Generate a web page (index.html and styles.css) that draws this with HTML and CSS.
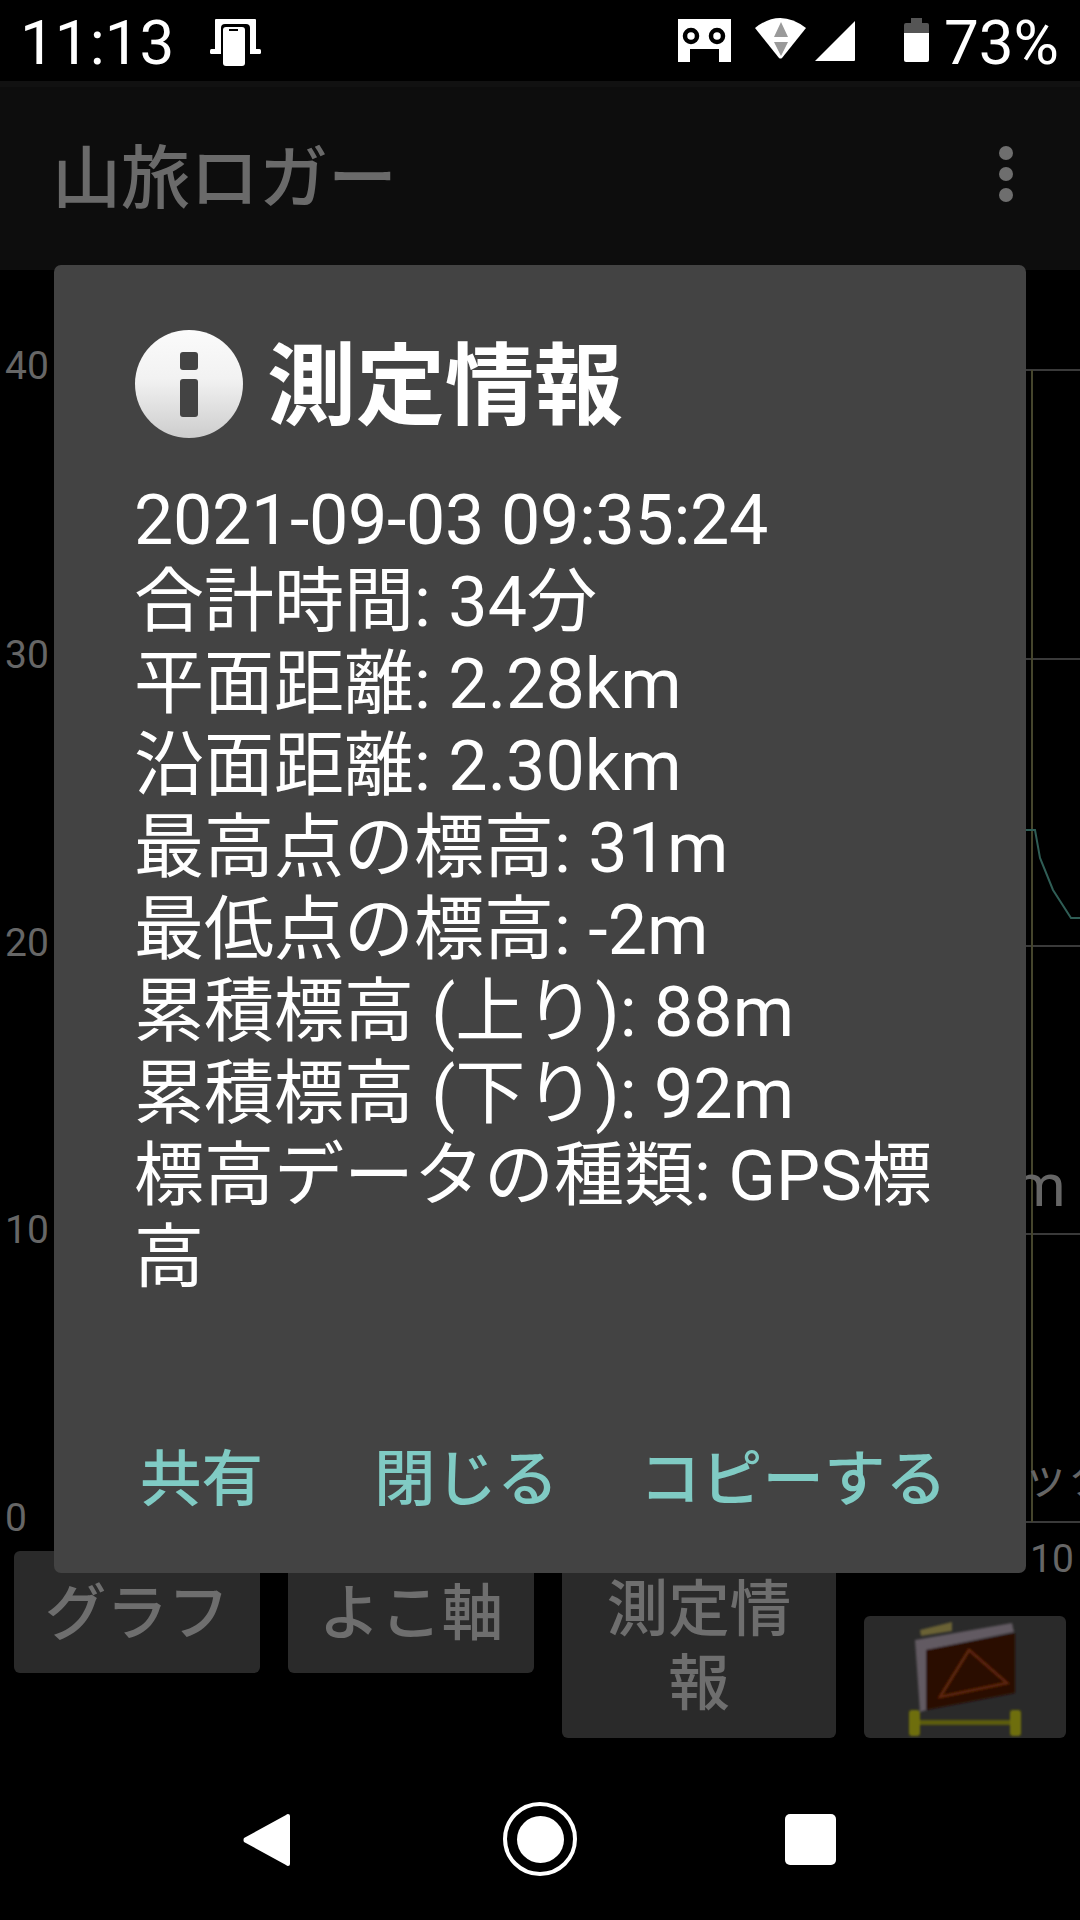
FILE: index.html
```html
<!DOCTYPE HTML>
<html lang="ja">
	<head>
		<title>山旅ロガー</title>
		<meta charset="UTF-8">
		<link rel="stylesheet" href="styles.css">
	</head>

	<body>
		<div class="screen">
			<div class="status_bar">
				<div class="status_left">
					<span class="clock">11:13</span>
					<svg class="ic_cast" width="51" height="47" viewBox="0 0 51 47">
						<path d="M5 1a1 1 0 0 1 1-1h39a1 1 0 0 1 1 1v30H5z" fill="#fff"/>
						<rect x="0" y="30" width="51" height="5" rx="1.5" fill="#fff"/>
						<rect x="11" y="5" width="29" height="42" rx="4" fill="#000"/>
						<rect x="13" y="8" width="22" height="39" rx="3" fill="#fff"/>
						<rect x="19" y="10" width="9" height="2" fill="#000"/>
					</svg>
				</div>
				<div class="status_right">
					<svg class="ic_tape" width="53" height="43" viewBox="0 0 53 43">
						<path d="M0 0h53v43H41V30H12v13H0z" fill="#fff"/>
						<circle cx="13" cy="17" r="6" fill="#fff" stroke="#000" stroke-width="4.5"/>
						<circle cx="39" cy="17" r="6" fill="#fff" stroke="#000" stroke-width="4.5"/>
					</svg>
					<svg class="ic_wifi" width="51" height="41" viewBox="0 0 51 41">
						<path d="M0 10Q25 -10 51 10L27 40q-1.500 1-3 0z" fill="#fff"/>
						<path d="M26 4l7 15H19zM19 24h14l-7 14z" fill="#9a9a9a"/>
					</svg>
					<svg class="ic_signal" width="40" height="40" viewBox="0 0 40 40">
						<path d="M40 0v39a1 1 0 0 1-1 1H0z" fill="#fff"/>
					</svg>
					<svg class="ic_battery" width="25" height="44" viewBox="0 0 25 44">
						<path d="M7 0h11v5h5a2 2 0 0 1 2 2v9H0V7a2 2 0 0 1 2-2h5z" fill="#555"/>
						<path d="M0 15h25v27a2 2 0 0 1-2 2H2a2 2 0 0 1-2-2z" fill="#fff"/>
					</svg>
					<span class="battery_text">73%</span>
				</div>
			</div>

			<div class="app_bar">
				<span class="app_title">山旅ロガー</span>
				<div class="menu_dots"><i></i><i></i><i></i></div>
			</div>

			<div class="chart">
				<svg class="chart_lines" width="1080" height="1281" viewBox="0 0 1080 1281">
					<g stroke="#3a3a3a" stroke-width="2">
						<path d="M1024 100H1080M1024 389H1080M1024 676H1080M1024 964H1080M1024 1252H1080"/>
					</g>
					<path d="M1032 100V1252" stroke="#45452c" stroke-width="2"/>
					<path d="M1024 560H1035L1040 588L1053 620L1071 648H1080" fill="none" stroke="#2f5d55" stroke-width="2"/>
				</svg>
				<span class="y_label y40">40</span>
				<span class="y_label y30">30</span>
				<span class="y_label y20">20</span>
				<span class="y_label y10">10</span>
				<span class="y_label y0">0</span>
				<span class="unit_label">m</span>
				<span class="touch_label">ック</span>
				<span class="x_label">10</span>
			</div>

			<div class="buttons">
				<div class="btn btn_graph">グラフ</div>
				<div class="btn btn_axis">よこ軸</div>
				<div class="btn btn_info">測定情報</div>
				<div class="btn btn_icon">
					<svg class="ic_sign" width="202" height="122" viewBox="0 0 202 122">
						<g filter="url(#soft)">
							<path d="M56 14L88 6V15L57 20z" fill="#6a6236"/>
							<path d="M51 24L148 7L150 16L63 34V94L56 96z" fill="#625a62"/>
							<path d="M62 34L151 17V77L62 94z" fill="#2a0b06"/>
							<path d="M105 34L143 67L76 81z" fill="none" stroke="#5e2708" stroke-width="2.500"/>
							<rect x="45" y="94" width="11" height="26" rx="3" fill="#6e6e08"/>
							<rect x="146" y="94" width="11" height="26" rx="3" fill="#6e6e08"/>
							<rect x="56" y="104" width="90" height="5" fill="#5c5c10"/>
						</g>
						<defs>
							<filter id="soft"><feGaussianBlur stdDeviation="1.2"/></filter>
						</defs>
					</svg>
				</div>
			</div>

			<div class="nav_bar">
				<svg class="nav_back" width="48" height="54" viewBox="0 0 48 54">
					<path d="M45 1a2 2 0 0 1 2 2V51a2 2 0 0 1-2 2q-1 0-2-1L1 29q-1-2 0-4L43 2q1-1 2-1z" fill="#fff"/>
				</svg>
				<div class="nav_home"><i></i></div>
				<div class="nav_square"></div>
			</div>

			<div class="dialog">
				<div class="dialog_head">
					<div class="info_icon"><i class="info_dot"></i><i class="info_stem"></i></div>
					<h2 class="dialog_title">測定情報</h2>
				</div>
				<div class="dialog_body">
					<span class="date_line">2021-09-03 09:35:24</span><br>
					合計時間: 34分<br>
					平面距離: 2.28km<br>
					沿面距離: 2.30km<br>
					最高点の標高: 31m<br>
					最低点の標高: -2m<br>
					累積標高 (上り): 88m<br>
					累積標高 (下り): 92m<br>
					標高データの種類: GPS標高
				</div>
				<div class="dialog_actions">
					<span class="action action_share">共有</span>
					<span class="action">閉じる</span>
					<span class="action">コピーする</span>
				</div>
			</div>
		</div>
	</body>
</html>
```

FILE: styles.css
```css
html, body
	{
		margin: 0;
		padding: 0;
		background: #000;
	}

.screen
	{
		position: relative;
		width: 1080px;
		height: 1920px;
		overflow: hidden;
		display: flex;
		flex-direction: column;
		background: #000;
		font-family: Roboto, "Noto Sans CJK JP", sans-serif;
	}

/* status bar */
.status_bar
	{
		height: 81px;
		display: flex;
		justify-content: space-between;
		align-items: flex-start;
		padding: 0 21px 0 20px;
		box-sizing: border-box;
		color: #fff;
	}
.status_left, .status_right
	{
		display: flex;
		align-items: flex-start;
	}
.clock, .battery_text
	{
		font-size: 62px;
		line-height: 86px;
	}
.ic_cast
	{
		margin: 19px 0 0 36px;
	}
.ic_tape
	{
		margin-top: 19px;
	}
.ic_wifi
	{
		margin: 18px 0 0 24px;
	}
.ic_signal
	{
		margin: 21px 0 0 9px;
	}
.ic_battery
	{
		margin: 18px 0 0 49px;
	}
.battery_text
	{
		margin-left: 15px;
	}

/* app bar */
.app_bar
	{
		height: 189px;
		display: flex;
		justify-content: space-between;
		align-items: center;
		padding: 0 67px 12px 52px;
		box-sizing: border-box;
		background: #0d0d0d;
		border-top: 6px solid #111;
	}
.app_title
	{
		font-size: 69px;
		font-weight: 500;
		color: #6a6a6a;
	}
.menu_dots
	{
		display: flex;
		flex-direction: column;
		gap: 7px;
		margin-top: 2px;
	}
.menu_dots i
	{
		width: 14px;
		height: 14px;
		border-radius: 50%;
		background: #6e6e6e;
	}

/* chart behind the dialog */
.chart
	{
		position: relative;
		height: 1281px;
	}
.chart_lines
	{
		position: absolute;
		left: 0;
		top: 0;
	}
.y_label, .x_label, .unit_label, .touch_label
	{
		position: absolute;
		color: #666;
		line-height: 1;
	}
.y_label
	{
		left: 5px;
		font-size: 39px;
	}
.y40 { top: 77px; }
.y30 { top: 366px; }
.y20 { top: 654px; }
.y10 { top: 941px; }
.y0 { top: 1229px; }
.unit_label
	{
		left: 1013px;
		top: 886px;
		font-size: 60px;
	}
.touch_label
	{
		left: 1023px;
		top: 1186px;
		font-size: 45px;
		white-space: nowrap;
	}
.x_label
	{
		left: 1030px;
		top: 1270px;
		font-size: 39px;
	}

/* bottom buttons */
.buttons
	{
		height: 187px;
		display: flex;
		align-items: flex-start;
		gap: 28px;
		padding-left: 14px;
	}
.btn
	{
		width: 246px;
		height: 122px;
		display: flex;
		align-items: center;
		justify-content: center;
		box-sizing: border-box;
		padding-top: 4px;
		text-align: center;
		border-radius: 6px;
		background: #2a2a2a;
		color: #6e6e6e;
		font-size: 61.5px;
		font-weight: 500;
		line-height: 74px;
	}
.btn_info
	{
		width: 274px;
		height: 187px;
		padding: 4px 40px 0;
	}
.btn_icon
	{
		width: 202px;
		padding: 0;
		align-self: flex-end;
	}

/* navigation bar */
.nav_bar
	{
		position: relative;
		height: 182px;
	}
.nav_back, .nav_home, .nav_square
	{
		position: absolute;
	}
.nav_back
	{
		left: 243px;
		top: 75px;
	}
.nav_home
	{
		left: 503px;
		top: 64px;
		width: 74px;
		height: 74px;
		box-sizing: border-box;
		border: 4px solid #fff;
		border-radius: 50%;
		display: flex;
		align-items: center;
		justify-content: center;
	}
.nav_home i
	{
		width: 47px;
		height: 47px;
		border-radius: 50%;
		background: #fff;
	}
.nav_square
	{
		left: 785px;
		top: 76px;
		width: 51px;
		height: 51px;
		border-radius: 5px;
		background: #fff;
	}

/* dialog */
.dialog
	{
		position: absolute;
		left: 54px;
		top: 265px;
		width: 972px;
		height: 1308px;
		box-sizing: border-box;
		padding: 65px 82px 0 81px;
		display: flex;
		flex-direction: column;
		border-radius: 7px;
		background: #434343;
		color: #fff;
	}
.dialog_head
	{
		display: flex;
		align-items: center;
		gap: 24px;
		height: 108px;
	}
.info_icon
	{
		position: relative;
		flex: none;
		width: 108px;
		height: 108px;
		border-radius: 50%;
		background: linear-gradient(#fbfbfb, #f2f2f2 45%, #cdcdcd);
	}
.info_dot, .info_stem
	{
		position: absolute;
		left: 45px;
		width: 18px;
		border-radius: 3px;
		background: #434343;
	}
.info_dot
	{
		top: 22px;
		height: 18px;
	}
.info_stem
	{
		top: 49px;
		height: 38px;
	}
.dialog_title
	{
		margin: 0;
		padding-top: 6px;
		font-size: 89px;
		font-weight: 700;
		line-height: 108px;
	}
.dialog_body
	{
		margin-top: 41px;
		margin-left: -1px;
		font-size: 70px;
		line-height: 82px;
	}
.date_line
	{
		letter-spacing: -0.35px;
	}
.dialog_actions
	{
		margin-top: auto;
		margin-bottom: 63px;
		margin-left: 5px;
		display: flex;
		gap: 81px;
		white-space: nowrap;
	}
.action
	{
		font-size: 61.5px;
		font-weight: 500;
		line-height: 60px;
		color: #80cbc4;
	}
.action_share
	{
		margin-right: 30px;
	}
```
